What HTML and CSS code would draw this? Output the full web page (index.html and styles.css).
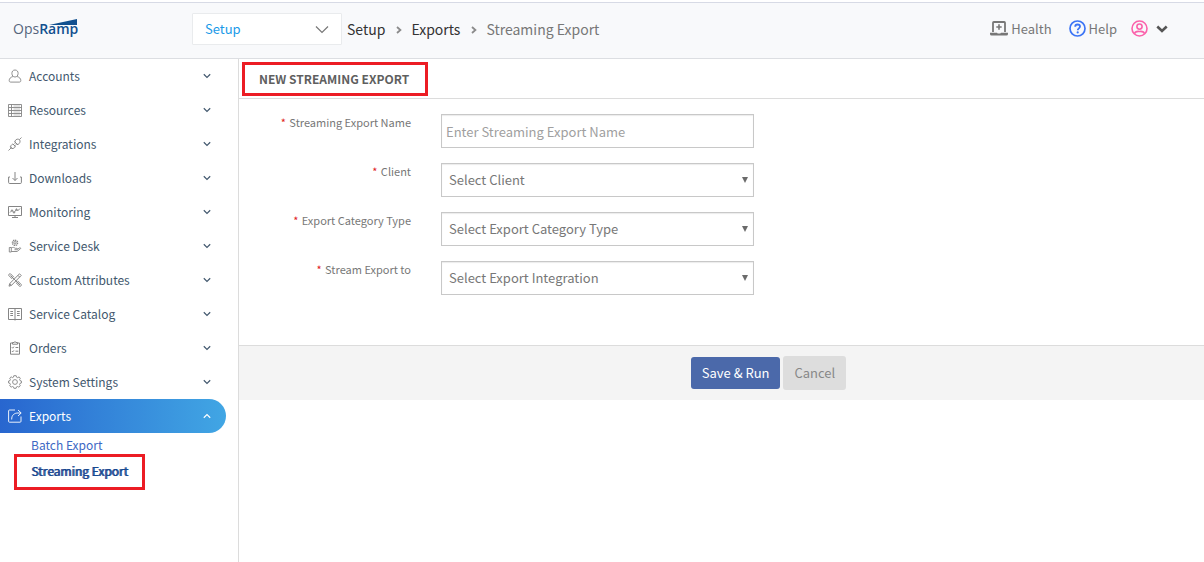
FILE: index.html
```html
<!DOCTYPE html>
<html lang="en">
<head>
<meta charset="utf-8">
<meta name="viewport" content="width=device-width, initial-scale=1">
<title>New Streaming Export</title>
<link rel="stylesheet" href="styles.css">
</head>
<body>
<svg class="defs" aria-hidden="true">
  <symbol id="down" viewBox="0 0 8 6"><path d="M.8 1.300 4 4.400 7.200 1.300" fill="none" stroke="currentColor" stroke-width="1.200"/></symbol>
</svg>
<header class="topbar">
  <a class="logo" href="#" aria-label="OpsRamp">
    <span class="logo-ops">Ops</span><span class="logo-ramp">Ramp</span>
    <svg class="logo-wedge" viewBox="0 0 28 6" aria-hidden="true"><path d="M0 6 28 0V6Z" fill="#11508f"/></svg>
  </a>
  <div class="module">
    <select class="module-select" aria-label="Module"><option>Setup</option></select>
    <svg class="module-arrow" viewBox="0 0 14 9" aria-hidden="true"><path d="M1 1.5 7 7.5 13 1.5" fill="none" stroke="#777" stroke-width="1.2"/></svg>
  </div>
  <nav class="crumbs" aria-label="Breadcrumb">
    <a href="#">Setup</a>
    <svg class="crumb-sep" viewBox="0 0 6 8" aria-hidden="true"><path d="M1 1 4.4 4 1 7" fill="none" stroke="#8b8b8b" stroke-width="1.8"/></svg>
    <a href="#">Exports</a>
    <svg class="crumb-sep" viewBox="0 0 6 8" aria-hidden="true"><path d="M1 1 4.4 4 1 7" fill="none" stroke="#8b8b8b" stroke-width="1.8"/></svg>
    <span class="crumb-now">Streaming Export</span>
  </nav>
  <div class="tools">
    <a class="tool" href="#">
      <svg class="tool-laptop" viewBox="0 0 18 15" aria-hidden="true"><path d="M3 11V1.8Q3 1 3.8 1H14.2Q15 1 15 1.8V11" fill="none" stroke="#777" stroke-width="1.8"/><path d="M9 3.3V8.7M6.3 6H11.7" stroke="#777" stroke-width="1.6"/><path d="M0 11.8H7L7.7 12.6H10.3L11 11.8H18V13Q18 14.6 16.4 14.6H1.6Q0 14.6 0 13Z" fill="#777"/></svg>
      Health
    </a>
    <a class="tool" href="#">
      <svg class="tool-round" viewBox="0 0 17 17" aria-hidden="true"><circle cx="8.500" cy="8.500" r="7.500" fill="none" stroke="#3b74f5" stroke-width="1.7"/><path d="M6.200 6.700C6.200 3.700 11 3.800 11 6.600 11 8.400 8.700 8.300 8.700 10.300" fill="none" stroke="#3b74f5" stroke-width="1.800"/><circle cx="8.700" cy="12.400" r="1.100" fill="#3b74f5"/></svg>
      Help
    </a>
    <button class="user" type="button" aria-label="User menu">
      <svg class="tool-round" viewBox="0 0 17 17" aria-hidden="true"><g fill="none" stroke="#fb62ab" stroke-width="1.6"><circle cx="8.500" cy="8.500" r="7.500"/><circle cx="8.500" cy="6.600" r="2.600"/><path d="M3.600 13.600C4.200 11.200 6 11.200 8.500 11.500 11 11.200 12.800 11.200 13.400 13.600"/></g></svg>
      <svg class="user-arrow" viewBox="0 0 12 8" aria-hidden="true"><path d="M1.300 1.500 6 6 10.700 1.500" fill="none" stroke="#555" stroke-width="2.600"/></svg>
    </button>
  </div>
</header>
<div class="layout">
  <nav class="sidebar" aria-label="Main">
    <ul class="menu">
      <li><a class="item" href="#"><svg class="ico" viewBox="0 0 14 14"><path d="M7 1C4.900 1 3.800 2.500 3.900 4.600 4 6.600 5.200 8 7 8S10 6.600 10.100 4.600C10.200 2.500 9.100 1 7 1ZM4.900 7.500C2.500 8.300 1.200 9.500 1.200 11.600 1.200 12.700 1.800 13.100 3 13.100H11C12.200 13.100 12.800 12.700 12.800 11.600 12.800 9.500 11.500 8.300 9.100 7.500"/></svg><span>Accounts</span><svg class="chev"><use href="#down"/></svg></a></li>
      <li><a class="item" href="#"><svg class="ico" viewBox="0 0 14 14"><path d="M.5 1.500H13.500V13.500H.5ZM.5 4.500H13.500M.5 7.500H13.500M.5 10.500H13.500M3.500 1.500V13.500"/><path d="M5.500 3H12M5.500 6H12M5.500 9H12M5.500 12H12" stroke-width=".5"/></svg><span>Resources</span><svg class="chev"><use href="#down"/></svg></a></li>
      <li><a class="item" href="#"><svg class="ico" viewBox="0 0 14 14"><path d="M.5 13.500 3 11M2.300 9.500 4.600 11.800M3 8.500C4.500 6.500 5.500 7.500 6.500 8.500S7 11 5 11.500C3 12 2 10.500 3 8.500ZM4.800 6.800 7.500 9.500M6.500 4.500 10 8M7 4C8 2 10 1.500 11.500 2.800 12.700 4 12 6.500 10 7.500M7 4C6.500 5.500 8.500 7.500 10 7.500M11.300 2.700 13.500.5M5 8 6.500 6.500M6.500 9 8 7.500"/></svg><span>Integrations</span><svg class="chev"><use href="#down"/></svg></a></li>
      <li><a class="item" href="#"><svg class="ico" viewBox="0 0 14 14"><path d="M7 1V9.500M4.500 7 7 9.500 9.500 7M2 6H.6V11.500Q.6 12.500 1.800 12.500H12.200Q13.400 12.500 13.400 11.500V6H12" stroke-width="1"/></svg><span>Downloads</span><svg class="chev"><use href="#down"/></svg></a></li>
      <li><a class="item" href="#"><svg class="ico" viewBox="0 0 14 14"><path d="M.5 1.500H13.500V10.500H.5ZM7 10.500V12.500M4 12.500H10M2 7.500 4 5.500 6 7.500 8.500 4.500 9.500 6 12 3.500" stroke-width="1"/><circle cx="4" cy="5.500" r=".7"/><circle cx="6" cy="7.500" r=".7"/><circle cx="8.500" cy="4.500" r=".7"/></svg><span>Monitoring</span><svg class="chev"><use href="#down"/></svg></a></li>
      <li><a class="item" href="#"><svg class="ico" viewBox="0 0 14 14"><circle cx="7" cy="3.800" r="2.600" stroke-dasharray="1.300 .7" stroke-width="1.400"/><circle cx="7" cy="3.800" r="1.200"/><path d="M1.300 8.500H3.300V13H1.300ZM3.300 9C5 8 6 8.300 7.200 9.300H9C9.800 9.500 9.500 10.700 8.800 10.700H6.500M9.300 10.300 11.800 8.800C12.700 8.600 13 9.400 12.400 9.900L9 12.500H3.300"/></svg><span>Service Desk</span><svg class="chev"><use href="#down"/></svg></a></li>
      <li><a class="item" href="#"><svg class="ico" viewBox="0 0 14 14"><path d="M2.500.8 6 4.300M.8 2.500 4.300 6M.8 2.500C.6 1.300 1.300.6 2.500.8M9.500 7.800 13.200 11.500C13.600 12.700 12.700 13.600 11.500 13.200L7.800 9.500M2.500 2.500 12 12M11.500.8 13.200 2.500 3.500 12.300 1 13.200 1.700 10.600ZM10 2.400 11.700 4.100M1.700 10.600 3.500 12.300" stroke-width="1"/></svg><span>Custom Attributes</span><svg class="chev"><use href="#down"/></svg></a></li>
      <li><a class="item" href="#"><svg class="ico" viewBox="0 0 14 14"><path d="M.5 1.500H13.500V12.500H.5ZM7 1.500V13.500M2.300 4.500H5M2.300 6.500H5M2.300 8.500H5M9 4.500H11.700M9 6.500H11.700M9 8.500H11.700" stroke-width="1"/></svg><span>Service Catalog</span><svg class="chev"><use href="#down"/></svg></a></li>
      <li><a class="item" href="#"><svg class="ico" viewBox="0 0 14 14"><path d="M4.500 2H2.500V13.200H11.500V2H9.500M4.500 3.200V1.500H6L7 .6 8 1.500H9.500V3.200ZM3.900 6.300 4.700 7.200 5.900 5.700M7.500 6.500H10.300M3.900 10 4.700 10.900 5.900 9.400M7.500 10.200H10.300" stroke-width="1"/></svg><span>Orders</span><svg class="chev"><use href="#down"/></svg></a></li>
      <li><a class="item" href="#"><svg class="ico" viewBox="0 0 14 14"><path d="M5.800.7H8.200L8.600 2.200 9.700 2.700 11.100 1.900 12.300 3.300 11.600 4.600 12 5.600 13.400 6V8L12 8.400 11.600 9.500 12.300 10.800 10.900 12.200 9.600 11.500 8.500 11.900 8.100 13.300H5.900L5.500 11.900 4.400 11.500 3.100 12.200 1.700 10.800 2.400 9.500 2 8.400.6 8V6L2 5.600 2.400 4.500 1.700 3.200 3.100 1.800 4.400 2.600 5.400 2.200Z"/><circle cx="7" cy="7" r="2.400"/></svg><span>System Settings</span><svg class="chev"><use href="#down"/></svg></a></li>
      <li>
        <a class="item item-open" href="#"><svg class="ico" viewBox="0 0 14 14"><path d="M7 1H1.500Q.6 1 .6 1.900V12.300Q.6 13.200 1.500 13.200H12Q13 13.200 13 12.300V7.500M3.700 10.500C3.500 6 6.500 4 10 4H13M10 1 13.200 4 10 7"/></svg><span>Exports</span><svg class="chev chev-up"><use href="#down"/></svg></a>
        <ul class="submenu">
          <li><a href="#">Batch Export</a></li>
          <li class="marked"><a class="current" href="#" aria-current="page">Streaming Export</a></li>
        </ul>
      </li>
    </ul>
  </nav>
  <main class="main">
    <div class="title-row"><h1 class="title">New Streaming Export</h1></div>
    <form class="form">
      <div class="fields">
        <label for="name"><span class="req">*</span> Streaming Export Name</label>
        <input class="field" id="name" type="text" placeholder="Enter Streaming Export Name">
        <label for="client"><span class="req">*</span> Client</label>
        <div class="pick"><select class="field" id="client"><option>Select Client</option></select></div>
        <label for="category"><span class="req">*</span> Export Category Type</label>
        <div class="pick"><select class="field" id="category"><option>Select Export Category Type</option></select></div>
        <label for="target"><span class="req">*</span> Stream Export to</label>
        <div class="pick"><select class="field" id="target"><option>Select Export Integration</option></select></div>
      </div>
      <div class="actions">
        <button class="btn btn-save" type="button">Save &amp; Run</button>
        <button class="btn btn-cancel" type="button">Cancel</button>
      </div>
    </form>
  </main>
</div>
</body>
</html>
```
FILE: styles.css
```css
*, *::before, *::after { box-sizing: border-box; }
body {
  margin: 0;
  min-height: 100vh;
  display: flex;
  flex-direction: column;
  background: #fff;
  color: #777;
  font: 12px/20px "Noto Sans CJK SC", "Noto Sans", sans-serif;
}
a { color: inherit; text-decoration: none; }
ul { list-style: none; margin: 0; padding: 0; }
button, input, select { font: inherit; }
svg { flex: none; }
.defs { display: none; }

.topbar {
  display: flex;
  align-items: center;
  height: 57px;
  margin-top: 2px;
  padding: 0 36px 4px 0;
  background: #f8f9fb;
  border-top: 1px solid #d7dae5;
  border-bottom: 1px solid #dcdee2;
}
.logo {
  position: relative;
  display: flex;
  width: 178px;
  padding-left: 13px;
  margin-right: 14px;
  font: 14px/20px "Open Sans", sans-serif;
  color: #56657b;
}
.logo-ramp { font-weight: 600; color: #11508f; }
.logo-wedge { position: absolute; left: 49px; top: 0; width: 28px; height: 6px; }
.module { position: relative; width: 150px; }
.module-select {
  appearance: none;
  display: block;
  width: 100%;
  height: 32px;
  padding: 0 12px;
  border: 1px solid #e9ebed;
  border-radius: 1px;
  background: #fff;
  color: #199ae8;
  font-size: 13px;
}
.module-arrow { position: absolute; right: 13px; top: 12px; width: 14px; height: 9px; pointer-events: none; }
.crumbs {
  display: flex;
  align-items: center;
  margin-left: 5px;
  color: #333;
  font-size: 14px;
}
.crumb-sep { width: 6px; height: 8px; margin: 2px 9px 0 11px; }
.crumb-now { color: #777; }
.tools { display: flex; align-items: center; gap: 17px; margin-left: auto; font-size: 13px; }
.tool { display: flex; align-items: center; gap: 3px; }
.tool-laptop { width: 18px; height: 15px; }
.tool-round { width: 17px; height: 17px; }
.user { display: flex; align-items: center; gap: 8px; margin-left: -3px; padding: 0; border: 0; background: none; }
.user-arrow { width: 12px; height: 8px; }

.layout { flex: 1; display: flex; }
.sidebar { flex: none; width: 239px; border-right: 1px solid #dcdcdc; color: #42586e; }
.item {
  display: flex;
  align-items: center;
  width: 226px;
  height: 34px;
  padding: 0 15px 0 8px;
  gap: 7px;
}
.ico { width: 14px; height: 14px; fill: none; stroke: #858585; stroke-width: .9; }
.chev { width: 8px; height: 6px; margin-left: auto; }
.chev-up { transform: rotate(180deg); }
.item-open {
  border-radius: 0 17px 17px 0;
  background: linear-gradient(90deg, #2866cf, #41a6e4);
  color: #fff;
}
.item-open .ico { stroke: #fff; }
.submenu li { position: relative; height: 26px; padding: 2px 0 4px 31px; color: #3e68c4; }
.submenu .current { color: #194890; text-shadow: 1px 0 #194890; }
.marked::after {
  content: "";
  position: absolute;
  left: 14px;
  top: -5px;
  width: 131px;
  height: 36px;
  border: 3px solid #ec1c24;
}

.main { flex: 1; min-width: 0; }
.title-row { height: 40px; padding: 3px; border-bottom: 1px solid #dcdcdc; }
.title {
  display: inline-block;
  margin: 0;
  padding: 4px 16px 0 14px;
  height: 34px;
  border: 3px solid #ec1c24;
  color: #5f5f5f;
  font-size: 12px;
  line-height: 20px;
  text-transform: uppercase;
}
.fields {
  display: grid;
  grid-template-columns: 172px minmax(0, 313px);
  gap: 15px 30px;
  padding: 15px 0 50px;
}
.fields label { text-align: right; font-size: 11px; line-height: 16px; }
.req { color: #e02020; margin-right: 1px; }
.field {
  appearance: none;
  display: block;
  width: 100%;
  height: 34px;
  padding: 0 4px;
  border: 1px solid #c8c8c8;
  border-radius: 0;
  background: #fff;
  box-shadow: inset 0 1px 1px rgba(0, 0, 0, .08);
  color: #777;
  font-size: 13px;
}
.field::placeholder { color: #a0a0a0; opacity: 1; }
.pick { position: relative; }
.pick .field { padding: 0 20px 0 7px; }
.pick::after {
  content: "";
  position: absolute;
  right: 6px;
  top: 14px;
  border: 3px solid transparent;
  border-top: 6px solid #6b6b6b;
  border-bottom: 0;
  pointer-events: none;
}
.actions {
  display: flex;
  align-items: center;
  justify-content: center;
  gap: 3px;
  height: 55px;
  padding-left: 94px;
  border-top: 1px solid #dcdcdc;
  background: #f4f4f4;
}
.btn { height: 32px; padding: 0 11px; border: 0; border-radius: 3px; font-size: 13px; }
.btn-save { background: #4b69aa; color: #fff; }
.btn-cancel { height: 34px; background: #ddd; color: #888; }
```
